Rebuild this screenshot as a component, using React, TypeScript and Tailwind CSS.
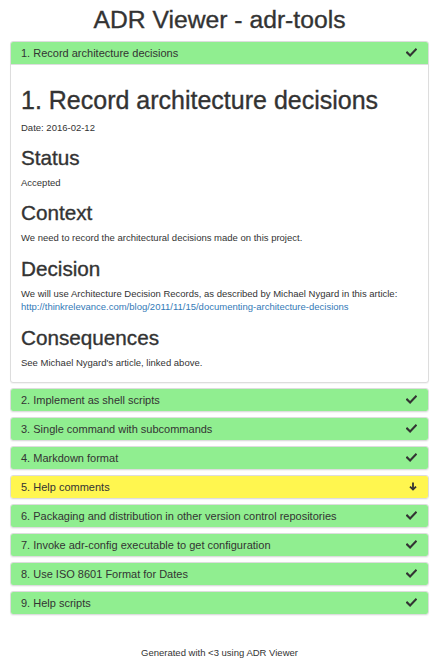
import React from 'react';

type Adr = {
    id: number
    title: string
    state: 'done' | 'pending'
}

const records: Adr[] = [
    { id: 2, title: '2. Implement as shell scripts', state: 'done' },
    { id: 3, title: '3. Single command with subcommands', state: 'done' },
    { id: 4, title: '4. Markdown format', state: 'done' },
    { id: 5, title: '5. Help comments', state: 'pending' },
    { id: 6, title: '6. Packaging and distribution in other version control repositories', state: 'done' },
    { id: 7, title: '7. Invoke adr-config executable to get configuration', state: 'done' },
    { id: 8, title: '8. Use ISO 8601 Format for Dates', state: 'done' },
    { id: 9, title: '9. Help scripts', state: 'done' },
];

const CheckIcon = () => (
    <svg width="11" height="9" viewBox="0 0 11 9" fill="none" className="shrink-0">
        <path d="M1.2 4.6 L4.1 7.4 L9.8 1.5" stroke="#333" strokeWidth="2.1" strokeLinecap="square" />
    </svg>
);

const ArrowDownIcon = () => (
    <svg width="8" height="9" viewBox="0 0 8 9" fill="none" className="shrink-0">
        <path d="M4 0.5 V7.6" stroke="#333" strokeWidth="1.8" />
        <path d="M1 4.6 L4 7.6 L7 4.6" stroke="#333" strokeWidth="1.8" />
    </svg>
);

const PanelHeader: React.FC<{ title: string, state: Adr['state'], open?: boolean }> = ({ title, state, open }) => (
    <div className={`flex items-center justify-between pl-[10px] pr-[11px] ${state === 'done' ? 'bg-[#90ee90]' : 'bg-[#fff64f]'} ${open ? 'h-[23px] border-b border-[#ddd]' : 'h-[22px]'}`}>
        <span className="text-[11px] leading-[12px] text-[#333]">{title}</span>
        {state === 'done' ? <CheckIcon /> : <ArrowDownIcon />}
    </div>
);

const heading = "[-webkit-text-stroke:0.35px_#333]";

const App: React.FC = () => {
    return (
        <div className="w-[439px] px-[10px] bg-white text-[#333] font-['Liberation_Sans',Arial,sans-serif]">
            <h1 className={`pt-[6px] mb-[7.5px] text-center text-[24.7px] leading-[27px] font-normal ${heading}`}>ADR Viewer - adr-tools</h1>

            <div className="border border-[#ddd] rounded-[3px] overflow-hidden bg-white shadow-[0_1px_1px_rgba(0,0,0,0.05)]">
                <PanelHeader title="1. Record architecture decisions" state="done" open />
                <div className="px-[10px] pt-[10px] pb-[8px] text-[9.5px] leading-[13.6px]">
                    <h1 className={`mt-[12.5px] mb-[6px] text-[25px] leading-[27.5px] ${heading}`}>1. Record architecture decisions</h1>
                    <p className="mb-[6.8px]">Date: 2016-02-12</p>
                    <h2 className={`mt-[13px] mb-[6px] text-[20.7px] leading-[22.8px] ${heading}`}>Status</h2>
                    <p className="mb-[6.8px]">Accepted</p>
                    <h2 className={`mt-[13px] mb-[6px] text-[20.7px] leading-[22.8px] ${heading}`}>Context</h2>
                    <p className="mb-[6.8px]">We need to record the architectural decisions made on this project.</p>
                    <h2 className={`mt-[13px] mb-[6px] text-[20.7px] leading-[22.8px] ${heading}`}>Decision</h2>
                    <p className="mb-[6.8px]">
                        We will use Architecture Decision Records, as described by Michael Nygard in this article:<br />
                        <a className="text-[#337ab7]" href="#">http://thinkrelevance.com/blog/2011/11/15/documenting-architecture-decisions</a>
                    </p>
                    <h2 className={`mt-[13px] mb-[6px] text-[20.7px] leading-[22.8px] ${heading}`}>Consequences</h2>
                    <p className="mb-[4.5px]">See Michael Nygard's article, linked above.</p>
                </div>
            </div>

            {records.map((r) => (
                <div key={r.id} className="mt-[5px] border border-[#ddd] rounded-[3px] overflow-hidden shadow-[0_1px_1px_rgba(0,0,0,0.05)]">
                    <PanelHeader title={r.title} state={r.state} />
                </div>
            ))}

            <footer className="mt-[31px] pb-[12px] text-center text-[9.5px] leading-[13.6px]">Generated with &lt;3 using ADR Viewer</footer>
        </div>
    );
};

export default App;
